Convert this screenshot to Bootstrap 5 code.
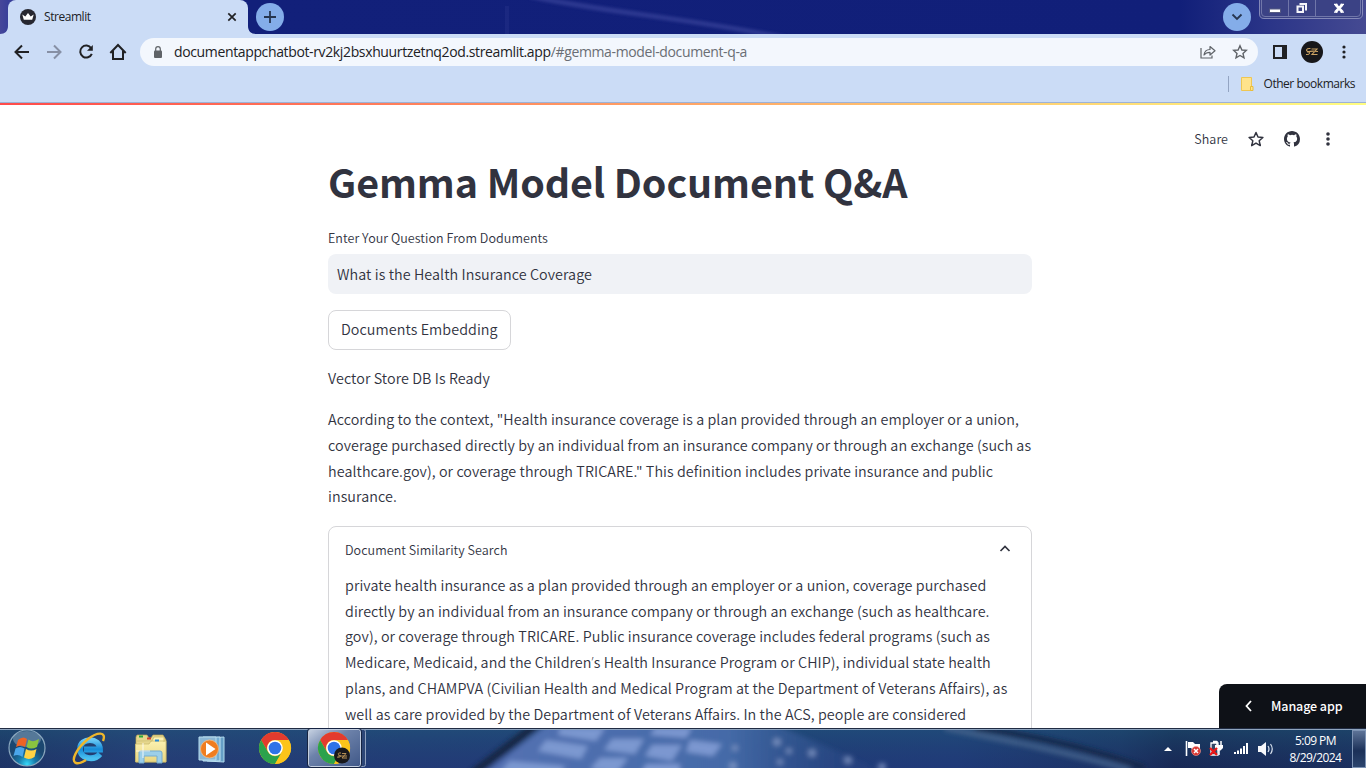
<!DOCTYPE html>
<html lang="en">
<head>
<meta charset="utf-8">
<meta name="viewport" content="width=device-width, initial-scale=1">
<title>Streamlit</title>
<link href="https://cdn.jsdelivr.net/npm/bootstrap@5.3.0/dist/css/bootstrap.min.css" rel="stylesheet">
<style>
  body { font-family: "Noto Sans CJK SC", "Noto Sans", sans-serif; color: #31333f; background: #fff; }
  svg { display: block; flex: none; }
  .ui-font { font-family: "Open Sans", "Noto Sans", sans-serif; color: #202124; }
  .tabstrip { height: 34px; background: linear-gradient(90deg, #46479a 0, #39409a 8px, #12207a 250px, #111f79 1180px, #2b3588 1270px, #454a92 1366px); }
  .streak { position: absolute; left: 0; top: 0; }
  .browser-tab { width: 240px; margin-left: 8px; padding: 0 10px 0 12px; background: #cbdcf6; border-radius: 8px 8px 0 0; font-size: 12px; position: relative; }
  .tab-title { letter-spacing: -.45px; margin-left: 8px; }
  .round-btn { width: 28px; height: 28px; margin-top: 3px; background: #84ade9; border-radius: 50%; }
  .win-controls { width: 105px; height: 19px; margin: 0 2px 0 8px; }
  .toolbar { height: 36px; background: #cbdcf6; padding: 0 6px; }
  .tool { width: 32px; height: 28px; display: flex; align-items: center; justify-content: center; flex: none; }
  .omnibox { width: 1118px; height: 28px; margin: 0 6px; background: #f3f7fd; border-radius: 14px; padding: 0 2px 0 14px; }
  .url { font-size: 14px; letter-spacing: -.363px; margin-left: 12px; line-height: 28px; }
  .url span { color: #6a6e74; }
  .bookmarks { height: 33px; background: #cbdcf6; border-bottom: 1px solid #9db2d6; padding: 0 11px 4px 0; font-size: 12px; }
  .bm-sep { width: 1px; height: 16px; background: #93a4c2; margin-right: 12px; }
  .bm-name { margin-left: 10px; letter-spacing: -.47px; }
  .rainbow { height: 2px; background: linear-gradient(90deg, #ff4b4b, #fffd80); }
  .page-area { height: 625px; overflow: hidden; }
  .app-tools { position: absolute; top: 18px; right: 20px; height: 36px; }
  .app-tools .tool { width: 36px; }
  .share { padding-right: 10px; }
  .app-column { width: 704px; padding-top: 49px; margin-left: 328px; }
  .app-title { font-size: 39.4px; line-height: 53px; font-weight: 700; margin-bottom: 20px; letter-spacing: -.11px; }
  .fine { font-size: 12.53px; font-weight: 350; letter-spacing: .06px; }
  .field-label { height: 27px; line-height: 22px; }
  .field-box { height: 40px; background: #f0f2f6; border-radius: 8px; padding-left: 9px; line-height: 40px; }
  .body-text { font-size: 14.32px; font-weight: 350; letter-spacing: .077px; white-space: nowrap; }
  .embed-btn { --bs-btn-border-color: #d6d6d9; --bs-btn-color: #31333f; --bs-btn-border-radius: 8px; width: 183px; height: 40px; margin-top: 16px; padding: 0 0 2px 12px; text-align: left; line-height: 36px; }
  .copy { line-height: 25.6px; margin: 15px 0 0; }
  .answer { padding-top: .8px; }
  .apos { font-family: "Open Sans", sans-serif; }
  .expander { width: 704px; height: 260px; margin-top: 17.2px; border: 1px solid #d6d6d9; border-radius: 8px; padding: 0 16px; }
  .expander-head { height: 45px; padding: 0 4px 0 0; }
  .expander-head span { padding-top: 2px; }
  .expander .copy { margin: 0; padding-top: .1px; }
  .manage { position: absolute; right: 0; bottom: 0; width: 147px; height: 44px; background: #0e1117; color: #fff; border-radius: 8px 0 0 0; font-size: 12.53px; font-weight: 500; padding-left: 24px; letter-spacing: -.1px; }
  .taskbar { height: 40px; background: #1f3f78; position: relative; overflow: hidden; }
  .taskbar-bg { position: absolute; left: 0; top: 0; }
  .task-icons, .tray { position: relative; height: 40px; }
  .clock { font-family: "Open Sans", sans-serif; color: #fff; font-size: 12px; line-height: 17px; width: 55px; letter-spacing: -.55px; text-align: center; padding-top: 4px; }
  .show-desk { width: 14px; height: 38px; margin: 2px 0 0 9px; border: 1px solid #7d93b4; background: linear-gradient(#5d7397, #1b3058 55%, #2c456e); }
</style>
</head>
<body class="overflow-hidden">

<header class="ui-font">
  <div class="tabstrip d-flex position-relative">
    <svg class="streak" width="1366" height="34">
      <defs><filter id="soft"><feGaussianBlur stdDeviation="1.6"/></filter></defs>
      <path d="M530 -4C600 12 690 18 785 38" stroke="#39439a" stroke-width="5" fill="none" opacity=".7" filter="url(#soft)"/>
      <path d="M507 6V36" stroke="#313b92" stroke-width="4" opacity=".3"/>
      <path d="M0 34C5 34 8 31 8 26V34ZM248 26C248 31 251 34 256 34H248Z" fill="#cbdcf6"/>
    </svg>
    <div class="browser-tab d-flex align-items-center">
      <svg width="16" height="16"><circle cx="8" cy="8" r="8" fill="#262730"/><path d="M2.300 5.500 5.300 7.400 8 3.900l2.700 3.500 3-1.900-1.500 5.200H3.800Z" fill="#fff"/></svg>
      <span class="tab-title">Streamlit</span>
      <svg class="ms-auto" width="12" height="12"><path d="M2.300 2.300 9.700 9.700M9.700 2.300 2.300 9.700" stroke="#202124" stroke-width="1.700"/></svg>
    </div>
    <div class="round-btn d-flex align-items-center justify-content-center position-relative ms-2">
      <svg width="12" height="12"><path d="M6 0V12M0 6H12" stroke="#26354f" stroke-width="1.800"/></svg>
    </div>
    <div class="round-btn d-flex align-items-center justify-content-center position-relative ms-auto">
      <svg width="12" height="12"><path d="M1.500 3.500 6 8l4.500-4.500" fill="none" stroke="#26354f" stroke-width="1.800"/></svg>
    </div>
    <svg class="win-controls position-relative" viewBox="0 0 105 19">
      <path d="M.5-1V14Q.5 18.500 5 18.500H99Q103.500 18.500 103.500 14V-1Z" fill="#3b4285" stroke="#8388b8"/>
      <path d="M2.500-1V13Q2.500 16.500 6 16.500H98Q101.500 16.500 101.500 13V-1M29.500 0V16.500M56.500 0V16.500" fill="none" stroke="#7076a9"/>
      <rect x="10.500" y="9" width="11" height="3.500" fill="#fff" stroke="#555a82"/>
      <path d="M40.500 4H47V10.500M38.500 6.500H44V12H38.500Z" stroke="#f5f5fa" stroke-width="2" fill="none"/>
      <path d="M76.500 4.500 83.500 12M83.500 4.500 76.500 12" stroke="#fff" stroke-width="2.600"/>
      <path d="M75 4.300H78.500M81.500 4.300H85M75 12.200H78.500M81.500 12.200H85" stroke="#fff" stroke-width="1.300"/>
    </svg>
  </div>

  <div class="toolbar d-flex align-items-center">
    <span class="tool"><svg width="16" height="16" fill="none" stroke="#202124" stroke-width="2"><path d="M15 8H2M8 1.500 1.500 8 8 14.500"/></svg></span>
    <span class="tool"><svg width="16" height="16" fill="none" stroke="#8790a5" stroke-width="2"><path d="M1 8H14M8 1.500 14.500 8 8 14.500"/></svg></span>
    <span class="tool"><svg width="16" height="16" fill="none" stroke="#202124" stroke-width="2"><path d="M13.200 4.200A6 6 0 1 0 13.800 9.800"/><path d="M14.800 1V6.800H9Z" fill="#202124" stroke="none"/></svg></span>
    <span class="tool"><svg width="18" height="18" fill="none" stroke="#202124" stroke-width="2"><path d="M1.300 10 9 2l7.700 8M4 8V16H14V8"/></svg></span>
    <div class="omnibox d-flex align-items-center">
      <svg width="8" height="12"><rect y="4.500" width="8" height="7.500" rx="1" fill="#5f6368"/><path d="M1.700 5V3a2.300 2.300 0 0 1 4.600 0V5" fill="none" stroke="#5f6368" stroke-width="1.200"/></svg>
      <div class="url">documentappchatbot-rv2kj2bsxhuurtzetnq2od.streamlit.app<span>/#gemma-model-document-q-a</span></div>
      <span class="tool ms-auto"><svg width="16" height="16" fill="none" stroke="#5f6368" stroke-width="1.200"><path d="M1 4V14H12V11.500"/><path d="M4 11C4.500 7 7 5.500 10 5.500V2.500L15 6.800 10 11V8.300C7.500 8.300 5.500 9 4 11Z" stroke-linejoin="round"/></svg></span>
      <span class="tool"><svg width="16" height="16" fill="none" stroke="#5f6368" stroke-width="1.400"><path d="M8 1.800 9.900 6l4.400.400-3.300 3 1 4.400L8 11.500l-4 2.300 1-4.400-3.300-3L6.100 6Z"/></svg></span>
    </div>
    <span class="tool"><svg width="14" height="14"><path d="M1 1H13V13H1Z" fill="none" stroke="#202124" stroke-width="2"/><path d="M9 0H14V14H9Z" fill="#202124"/></svg></span>
    <span class="tool"><svg width="22" height="22"><circle cx="11" cy="11" r="11" fill="#17171a"/><path d="M9.500 7.500C5 7 4.500 10 7 10.500S9 14 5 13.500M10.500 8H16L11 13.500H16.500M6 11Q11 9.500 17 10.500" stroke="#caa263" stroke-width="1.100" fill="none"/></svg></span>
    <span class="tool"><svg width="4" height="14" fill="#202124"><circle cx="2" cy="2" r="1.600"/><circle cx="2" cy="7" r="1.600"/><circle cx="2" cy="12" r="1.600"/></svg></span>
  </div>

  <div class="bookmarks d-flex align-items-center justify-content-end">
    <i class="bm-sep"></i>
    <svg width="13" height="14"><path d="M.5.500H10.500V13.500H.500Z" fill="#ffe38c" stroke="#eec653"/><path d="M9.500 9.500H12V13.500H9.500Z" fill="#ffe38c" stroke="#e8bd3b"/></svg>
    <span class="bm-name">Other bookmarks</span>
  </div>
</header>

<main class="page-area position-relative">
  <div class="rainbow"></div>
  <div class="app-tools fine d-flex align-items-center">
    <span class="share">Share</span>
    <span class="tool"><svg width="16" height="16" fill="none" stroke="#31333f" stroke-width="1.500"><path d="M8 1.500 10 6l4.900.500L11.200 9.800l1.100 4.800L8 12.100l-4.300 2.500 1.100-4.800L1.100 6.500 6 6Z" stroke-linejoin="round"/></svg></span>
    <span class="tool"><svg width="16" height="16" viewBox="0 0 16 16" fill="#31333f"><path d="M8 0C3.580 0 0 3.580 0 8c0 3.540 2.290 6.530 5.470 7.590.400.070.550-.170.550-.380 0-.190-.010-.820-.010-1.490-2.010.370-2.530-.490-2.690-.940-.090-.230-.480-.940-.820-1.130-.280-.150-.680-.520-.010-.530.630-.010 1.080.580 1.230.820.720 1.210 1.870.870 2.330.660.070-.520.280-.870.510-1.070-1.780-.200-3.640-.890-3.640-3.950 0-.870.310-1.590.820-2.150-.080-.200-.360-1.020.080-2.120 0 0 .670-.210 2.200.820a7.700 7.700 0 0 1 4 0c1.530-1.040 2.200-.820 2.200-.820.440 1.100.160 1.920.080 2.120.510.560.820 1.270.820 2.150 0 3.070-1.870 3.750-3.650 3.950.290.250.540.730.540 1.480 0 1.070-.010 1.930-.010 2.200 0 .210.150.460.550.380A8 8 0 0 0 16 8c0-4.420-3.580-8-8-8Z"/></svg></span>
    <span class="tool"><svg width="4" height="14" fill="#31333f"><circle cx="2" cy="2" r="1.800"/><circle cx="2" cy="7" r="1.800"/><circle cx="2" cy="12" r="1.800"/></svg></span>
  </div>

  <div class="app-column">
    <h1 class="app-title text-nowrap">Gemma Model Document Q&amp;A</h1>
    <div class="field-label fine">Enter Your Question From Doduments</div>
    <div class="field-box body-text">What is the Health Insurance Coverage</div>
    <button type="button" class="btn embed-btn body-text">Documents Embedding</button>
    <p class="copy body-text">Vector Store DB Is Ready</p>
    <p class="copy answer body-text">According to the context, "Health insurance coverage is a plan provided through an employer or a union,<br>coverage purchased directly by an individual from an insurance company or through an exchange (such as<br>healthcare.gov), or coverage through TRICARE." This definition includes private insurance and public<br>insurance.</p>
    <section class="expander">
      <div class="expander-head fine d-flex align-items-center justify-content-between">
        <span>Document Similarity Search</span>
        <svg width="12" height="12"><path d="M1.500 8 6 3.500 10.500 8" fill="none" stroke="#31333f" stroke-width="1.700"/></svg>
      </div>
      <p class="copy body-text">private health insurance as a plan provided through an employer or a union, coverage purchased<br>directly by an individual from an insurance company or through an exchange (such as healthcare.<br>gov), or coverage through TRICARE. Public insurance coverage includes federal programs (such as<br>Medicare, Medicaid, and the Children<span class="apos">’</span>s Health Insurance Program or CHIP), individual state health<br>plans, and CHAMPVA (Civilian Health and Medical Program at the Department of Veterans Affairs), as<br>well as care provided by the Department of Veterans Affairs. In the ACS, people are considered</p>
    </section>
  </div>
  <div class="manage d-flex align-items-center">
    <svg width="12" height="12"><path d="M8 1 3.500 6 8 11" fill="none" stroke="#fff" stroke-width="1.800"/></svg>
    <span class="ms-3">Manage app</span>
  </div>
</main>

<footer class="taskbar d-flex justify-content-between">
  <svg class="taskbar-bg" width="1366" height="40">
    <defs>
      <linearGradient id="base" x2="1"><stop stop-color="#1c3560"/><stop offset=".1" stop-color="#284278"/><stop offset=".3" stop-color="#234079"/><stop offset=".7" stop-color="#203f7c"/><stop offset=".82" stop-color="#1a3560"/><stop offset=".86" stop-color="#132446"/><stop offset="1" stop-color="#192f55"/></linearGradient>
      <linearGradient id="shade" x2="0" y2="1"><stop stop-color="#1f5277" stop-opacity=".6"/><stop offset="1" stop-color="#203070" stop-opacity=".35"/></linearGradient>
      <linearGradient id="keys" x2="1"><stop stop-color="#5470b2"/><stop offset=".6" stop-color="#456ba8"/><stop offset="1" stop-color="#2a4b88" stop-opacity=".1"/></linearGradient>
      <filter id="blur2" x="-20%" y="-50%" width="140%" height="200%"><feGaussianBlur stdDeviation="2.5"/></filter>
    </defs>
    <rect width="1366" height="40" fill="url(#base)"/><rect width="1366" height="40" fill="url(#shade)"/>
    <g filter="url(#blur2)">
      <path d="M472 46 540-6" stroke="#152544" stroke-width="8"/>
      <path d="M482 46 550-6H770L890 46Z" fill="url(#keys)"/>
      <g fill="#819cd4" opacity=".9"><path d="M560 0H605L596 13 558 7ZM546 12 588 18 581 31 538 23ZM510 33 565 38 560 48 500 44ZM612 11H644L635 26 604 22ZM600 30H628L616 46 590 41ZM652 17H682L672 33 645 28ZM655 0H692L686 10 650 7ZM690 12 722 16 713 28 686 24ZM646 36H680V46H640Z"/></g>
      <g fill="#8b9fca" opacity=".7"><circle cx="735" cy="20" r="3"/><circle cx="777" cy="14" r="4"/><circle cx="789" cy="23" r="3"/><circle cx="812" cy="25" r="4"/><circle cx="848" cy="32" r="4"/><circle cx="733" cy="38" r="4"/><circle cx="780" cy="34" r="3"/><circle cx="882" cy="39" r="4"/></g>
      <path d="M945 0C1010 13 1070 25 1130 42" stroke="#43618a" stroke-width="5" fill="none"/>
      <path d="M975 0C1040 8 1100 24 1145 40" stroke="#172847" stroke-width="5" fill="none"/>
    </g>
    <path d="M0 .5H1366" stroke="#202c43"/><path d="M0 1.500H1366" stroke="#8ea4bf"/>
  </svg>

  <svg class="task-icons" width="380" height="40">
    <defs>
      <radialGradient id="orb" cy=".95"><stop stop-color="#37d9fa"/><stop offset=".5" stop-color="#1677a6"/><stop offset="1" stop-color="#1b4770"/></radialGradient>
      <linearGradient id="glass" x2="1" y2="1"><stop stop-color="#c7d2e2"/><stop offset=".4" stop-color="#6d82aa"/><stop offset="1" stop-color="#405888"/></linearGradient>
      <linearGradient id="ieblue" x2="0" y2="1"><stop stop-color="#69c9f6"/><stop offset=".5" stop-color="#168bd8"/><stop offset="1" stop-color="#49bff0"/></linearGradient>
      <linearGradient id="paper" x2="0" y2="1"><stop stop-color="#fff6b8"/><stop offset="1" stop-color="#e9d681"/></linearGradient>
      <g id="chrome"><circle r="16" fill="#fbc116"/><path d="M-13.860-8A16 16 0 0 1 13.860-8H0A8 8 0 0 0-7 4Z" fill="#e33b2e"/><path d="M-13.860-8A16 16 0 0 0 0 16L7 4A8 8 0 0 1-7 4Z" fill="#2ba24c"/><path d="M13.860-8H0A8 8 0 0 1 7 4L0 16A16 16 0 0 0 13.860-8Z" fill="#fcc41a"/><circle r="7.800" fill="#fff"/><circle r="6.300" fill="#2f73e8"/></g>
    </defs>
    <circle cx="27" cy="20" r="18" fill="url(#orb)" stroke="#8aa7be" stroke-width="1.200"/>
    <ellipse cx="27" cy="11" rx="14" ry="8" fill="#c3d4e3" opacity=".35"/>
    <path d="M18 12Q23 7.500 27 11L25 19Q21 16 16 19Z" fill="#ed6425"/>
    <path d="M28.500 11.500Q33 15 39 11L37 19Q31 22 26.500 19Z" fill="#8ac440"/>
    <path d="M15.500 20.500Q20 17.500 24.500 20.500L22.500 29Q18 25.500 13.500 28Z" fill="#4aa6ea"/>
    <path d="M26 21Q31 24 36.500 21L34.500 29Q29 32.500 24 29.500Z" fill="#ffd244"/>
    <path d="M100 26C94 33 80 31 80 21C80 9 100 9 100 21.500H84" fill="none" stroke="url(#ieblue)" stroke-width="5.800"/>
    <path d="M103 13C107 3 97 4 88 11C77 20 70 33 76 35C79 36 83 34 86 32" fill="none" stroke="#eeb62a" stroke-width="2.400"/>
    <path d="M136 9 137 7H147L149 10H151L153 7H163L166 12V34H136Z" fill="#e6d78d" stroke="#b9a355" stroke-width=".7"/>
    <path d="M137 13H152L154 9H164V14M135.500 16H149L151 13H166V34H135.500Z" fill="url(#paper)" stroke="#cabb70" stroke-width=".8"/>
    <path d="M139 8.500H143" stroke="#27a83c" stroke-width="2"/><path d="M147 10.500H151" stroke="#d33e2f" stroke-width="2"/><path d="M155 12.500H159" stroke="#2b8ad5" stroke-width="2"/>
    <path d="M139 35V24Q139 23 141 23H160Q162 23 162 25V35H157V28H144V35Z" fill="#9ccfe9" stroke="#75acd0"/>
    <path d="M143 15V30M136 23H150" stroke="#fff" stroke-width="1.200" opacity=".7"/>
    <path d="M207 10 224 9V34L207 33Z" fill="#669fc6" stroke="#b3dcef"/><path d="M203 9H220V33H203Z" fill="#74add2" stroke="#c1e3f2"/><path d="M199 9H216V32H199Z" fill="#8bb7d5" stroke="#b9deef"/>
    <circle cx="209.500" cy="21" r="9" fill="#f07d20" stroke="#f6bd81" stroke-width=".8"/><path d="M206 14.500 215.500 21 206 27.500Z" fill="#fff"/>
    <use href="#chrome" x="275" y="20"/>
    <rect x="353.500" y="1.500" width="12" height="37" rx="2" fill="#2d4676" stroke="#8fa0bd"/>
    <rect x="308.500" y="1.500" width="52" height="37" rx="2" fill="url(#glass)" stroke="#c3cedf"/><rect x="307.500" y=".5" width="54" height="39" rx="3" fill="none" stroke="#162442"/>
    <use href="#chrome" x="334" y="20"/>
    <circle cx="342" cy="27.500" r="8" fill="#19191b"/><path d="M341 25C337 24.500 338 27 340 27.500S339 30 337 29M342 25.500H346L342 30H347M338 28H347" stroke="#c39b5b" fill="none" stroke-width=".9"/>
  </svg>

  <div class="tray d-flex">
    <svg width="131" height="40">
      <path d="M7 23H15L11 19Z" fill="#fff"/>
      <path d="M29.500 13V28" stroke="#fff" stroke-width="1.600"/><path d="M31 14H36L38 16H43V22H36L34 20H31Z" fill="#fff"/><circle cx="39" cy="23" r="4.500" fill="#d93630" stroke="#f4a19c" stroke-width=".6"/><path d="M37 21 41 25M41 21 37 25" stroke="#fff" stroke-width="1.500"/>
      <path d="M54 15H61V27H54ZM56 13.500H60" stroke="#fff" fill="#344767" stroke-width="1.300"/><path d="M58 17H66V20L63.500 22.500H60.500L58 20Z" fill="#fff"/><path d="M62 22V27M60 13V17M64 13V17" stroke="#fff" stroke-width="1.500"/><path d="M53 20 60 27M60 20 53 27" stroke="#ed1717" stroke-width="2.300"/>
      <path d="M78 26V24M81 26V22.500M84 26V20.500M87 26V18M90 26V15" stroke="#fff" stroke-width="2"/>
      <path d="M101 18H104L109 14V28L104 24H101Z" fill="#f6f7fa"/><path d="M111 18Q113 21 111 24M113.500 16Q117 21 113.500 26" stroke="#d8e1ed" stroke-width="1.200" fill="none"/>
    </svg>
    <div class="clock">5:09 PM<br>8/29/2024</div>
    <div class="show-desk"></div>
  </div>
</footer>
<script src="https://cdn.jsdelivr.net/npm/bootstrap@5.3.0/dist/js/bootstrap.bundle.min.js"></script>
</body>
</html>
